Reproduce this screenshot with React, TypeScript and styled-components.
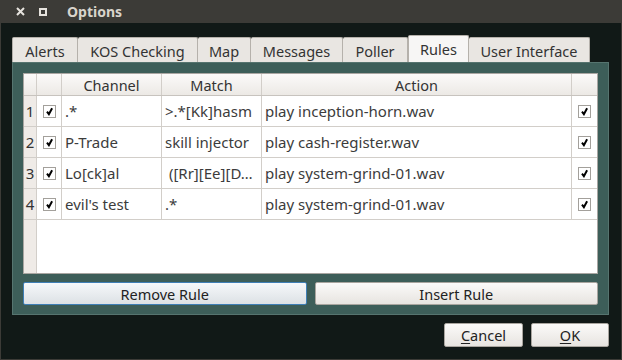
import React from 'react';
import styled, { createGlobalStyle } from 'styled-components';

const GlobalStyle = createGlobalStyle`
  html, body {
    margin: 0;
    padding: 0;
    background: #111917;
  }
  body {
    font-family: "Noto Sans", "DejaVu Sans", sans-serif;
    font-size: 14.5px;
    color: #3c3c3c;
  }
`;

const Window = styled.div`
  width: 622px;
  height: 360px;
  display: flex;
  flex-direction: column;
  overflow: hidden;
`;

const TitleBar = styled.div`
  height: 23px;
  flex: none;
  background: #3c3b37;
  display: flex;
  align-items: center;
  padding-left: 15px;
  color: #dfdbd2;
`;

const TitleButton = styled.div`
  width: 10px;
  height: 10px;
  margin-right: 13px;
  display: flex;
  align-items: center;
  justify-content: center;
`;

const Title = styled.span`
  font-weight: bold;
  font-size: 14px;
  margin-left: 6px;
  color: #d8d4cc;
`;

const Body = styled.div`
  flex: 1;
  display: flex;
  flex-direction: column;
  background: #111917;
  border: 1px solid #3c3b37;
  border-top: none;
  padding: 12px 12px 0 11px;
`;

const TabBar = styled.div`
  display: flex;
  align-items: flex-end;
  height: 27px;
`;

const Tab = styled.div<{ $w: number; $active?: boolean }>`
  width: ${p => p.$w}px;
  height: ${p => (p.$active ? 27 : 25)}px;
  box-sizing: border-box;
  background: ${p => (p.$active ? '#f7f6f5' : '#e9e6e2')};
  border: 1px solid #b5b1ab;
  border-bottom: none;
  border-left: ${p => (p.$active ? '1px solid #b5b1ab' : 'none')};
  border-radius: 2px 2px 0 0;
  display: flex;
  align-items: center;
  justify-content: center;
  color: #333;
  padding-top: ${p => (p.$active ? 0 : 1)}px;
  &:first-child {
    border-left: 1px solid #b5b1ab;
  }
`;

const Panel = styled.div`
  height: 253px;
  box-sizing: border-box;
  background: #3d5e59;
  border: 1px solid #56746f;
  padding: 10px 10px 9px 10px;
  display: flex;
  flex-direction: column;
  gap: 8px;
`;

const Table = styled.div`
  height: 201px;
  box-sizing: border-box;
  background: #fff;
  border: 1px solid #a9a6a2;
  display: flex;
  flex-direction: column;
`;

const COLS = '13px 25px 100px 100px 310px 25px';

const HeaderRow = styled.div`
  display: grid;
  grid-template-columns: ${COLS};
  height: 21px;
  flex: none;
  background: linear-gradient(#fbfaf9, #ece9e5);
  border-bottom: 1px solid #c7c3be;
`;

const HeaderCell = styled.div`
  border-right: 1px solid #d2cec9;
  display: flex;
  align-items: center;
  justify-content: center;
  color: #333;
  &:last-child {
    border-right: none;
  }
`;

const Row = styled.div`
  display: grid;
  grid-template-columns: ${COLS};
  height: 30px;
  flex: none;
  font-size: 15px;
  border-bottom: 1px solid #d2cec9;
`;

const RowNumber = styled.div`
  background: #efebe7;
  border-right: 1px solid #d2cec9;
  display: flex;
  align-items: center;
  justify-content: center;
  color: #333;
`;

const Cell = styled.div<{ $center?: boolean }>`
  border-right: 1px solid #d2cec9;
  display: flex;
  align-items: center;
  justify-content: ${p => (p.$center ? 'center' : 'flex-start')};
  padding-left: ${p => (p.$center ? 0 : 3)}px;
  white-space: pre;
  overflow: hidden;
  &:last-child {
    border-right: none;
  }
`;

const CheckBox = styled.div`
  width: 13px;
  height: 13px;
  box-sizing: border-box;
  border: 1px solid #a3a09b;
  background: #fff;
  display: flex;
  align-items: center;
  justify-content: center;
`;

const Filler = styled.div`
  flex: 1;
  display: flex;
`;

const FillerStrip = styled.div`
  width: 13px;
  background: #efebe7;
  border-right: 1px solid #d2cec9;
  box-sizing: border-box;
`;

const ButtonRow = styled.div`
  display: flex;
  gap: 8px;
`;

const Button = styled.div<{ $focus?: boolean; $w?: number; $h?: number }>`
  ${p => (p.$w ? `width: ${p.$w}px;` : 'flex: 1;')}
  height: ${p => p.$h || 23}px;
  box-sizing: border-box;
  border: 1px solid ${p => (p.$focus ? '#3f7fb6' : '#a9a59f')};
  border-radius: 2px;
  background: ${p =>
    p.$focus ? 'linear-gradient(#f6f8fa, #dce1e5)' : 'linear-gradient(#fbfaf9, #e7e4e0)'};
  display: flex;
  align-items: center;
  justify-content: center;
  color: #222;
  u {
    text-decoration-thickness: 1px;
    text-underline-offset: 2px;
  }
`;

const DialogButtons = styled.div`
  display: flex;
  justify-content: flex-end;
  gap: 8px;
  margin-top: 8px;
`;

const Check = () => (
  <svg width="9" height="9" viewBox="0 0 9 9">
    <path d="M2 4.6 L3.9 7.2 L7.1 1.3" fill="none" stroke="#000" strokeWidth="2" />
  </svg>
);

const tabs: [string, number][] = [
  ['Alerts', 66],
  ['KOS Checking', 120],
  ['Map', 53],
  ['Messages', 92],
  ['Poller', 65],
  ['Rules', 61],
  ['User Interface', 121],
];

const rules = [
  { channel: '.*', match: '>.*[Kk]hasm', action: 'play inception-horn.wav' },
  { channel: 'P-Trade', match: 'skill injector', action: 'play cash-register.wav' },
  { channel: 'Lo[ck]al', match: ' ([Rr][Ee][D…', action: 'play system-grind-01.wav' },
  { channel: "evil's test", match: '.*', action: 'play system-grind-01.wav' },
];

const App: React.FC = () => {
  return (
    <Window>
      <GlobalStyle />
      <TitleBar>
        <TitleButton>
          <svg width="9" height="9" viewBox="0 0 9 9">
            <path d="M1 1 L8 8 M8 1 L1 8" stroke="#e6e3de" strokeWidth="2" />
          </svg>
        </TitleButton>
        <TitleButton>
          <svg width="8" height="8" viewBox="0 0 8 8">
            <rect x="1" y="1" width="6" height="6" fill="none" stroke="#e6e3de" strokeWidth="2" />
          </svg>
        </TitleButton>
        <Title>Options</Title>
      </TitleBar>
      <Body>
        <TabBar>
          {tabs.map(([name, w]) => (
            <Tab key={name} $w={w} $active={name === 'Rules'}>{name}</Tab>
          ))}
        </TabBar>
        <Panel>
          <Table>
            <HeaderRow>
              <HeaderCell />
              <HeaderCell />
              <HeaderCell>Channel</HeaderCell>
              <HeaderCell>Match</HeaderCell>
              <HeaderCell>Action</HeaderCell>
              <HeaderCell />
            </HeaderRow>
            {rules.map((r, i) => (
              <Row key={i}>
                <RowNumber>{i + 1}</RowNumber>
                <Cell $center><CheckBox><Check /></CheckBox></Cell>
                <Cell>{r.channel}</Cell>
                <Cell>{r.match}</Cell>
                <Cell>{r.action}</Cell>
                <Cell $center><CheckBox><Check /></CheckBox></Cell>
              </Row>
            ))}
            <Filler>
              <FillerStrip />
            </Filler>
          </Table>
          <ButtonRow>
            <Button $focus>Remove Rule</Button>
            <Button>Insert Rule</Button>
          </ButtonRow>
        </Panel>
        <DialogButtons>
          <Button $w={79} $h={24}><span><u>C</u>ancel</span></Button>
          <Button $w={78} $h={24}><span><u>O</u>K</span></Button>
        </DialogButtons>
      </Body>
    </Window>
  );
};

export default App;
